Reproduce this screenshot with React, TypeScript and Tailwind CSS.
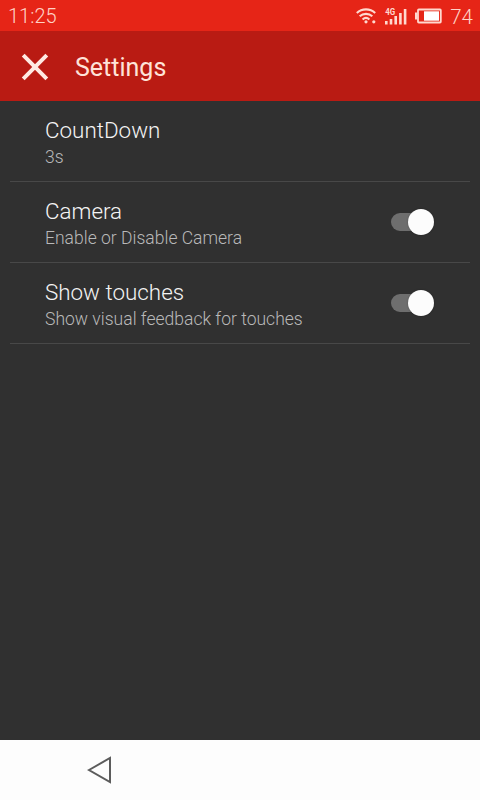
type SettingItem = {
  title: string
  summary: string
  hasSwitch: boolean
}

const settings: SettingItem[] = [
  { title: 'CountDown', summary: '3s', hasSwitch: false },
  { title: 'Camera', summary: 'Enable or Disable Camera', hasSwitch: true },
  { title: 'Show touches', summary: 'Show visual feedback for touches', hasSwitch: true },
]

function WifiIcon() {
  return (
    <svg width="20" height="16" viewBox="0 0 20 16" fill="none" stroke="#ffd9cf" strokeWidth="2.1">
      <path d="M.8 5C6 .2 14 .2 19.2 5" />
      <path d="M3.7 8.3C7.2 5 12.8 5 16.3 8.3" />
      <path d="M6.6 11.4C8.6 9.5 11.4 9.5 13.4 11.4" />
      <circle cx="10" cy="13.8" r="1.6" fill="#ffd9cf" stroke="none" />
      <circle cx="17.8" cy="13.8" r="1.6" fill="#ffd9cf" stroke="none" />
    </svg>
  )
}

function SignalIcon() {
  return (
    <svg width="22" height="17" viewBox="0 0 22 17" fill="#ffd9cf" overflow="visible">
      <text x="0.3" y="6.5" fontSize="9.5" fontWeight="700" textLength="10" lengthAdjust="spacingAndGlyphs">
        4G
      </text>
      <rect x="0" y="13" width="2.6" height="3.5" />
      <rect x="4.7" y="11" width="2.6" height="5.5" />
      <rect x="9.4" y="8" width="2.6" height="8.5" />
      <rect x="14.1" y="5" width="2.6" height="11.5" />
      <rect x="18.8" y="1" width="2.6" height="15.5" />
    </svg>
  )
}

function BatteryIcon() {
  return (
    <svg width="27" height="16" viewBox="0 0 27 16" fill="none">
      <rect x="3" y="1.5" width="22.8" height="13" rx="0.8" stroke="#ffd9cf" strokeWidth="1.8" />
      <rect x="0" y="4.5" width="2.4" height="7" fill="#ffd9cf" />
      <rect x="9" y="3.3" width="15" height="9.4" fill="#fff" />
    </svg>
  )
}

function Switch() {
  return (
    <div className="relative h-[26px] w-[43px]">
      <div className="absolute top-1 left-0 h-[18px] w-9 rounded-full bg-[#6e6e6e]" />
      <div className="absolute top-0 right-0 size-[26px] rounded-full bg-[#fcfcfc] shadow-[0_0_2px_rgba(0,0,0,0.3)]" />
    </div>
  )
}

export default function App() {
  return (
    <div className="flex h-screen w-full flex-col bg-[#303030] font-['Roboto',sans-serif]">
      {/* Status bar */}
      <div className="flex h-[31px] shrink-0 items-center justify-between bg-[#e62517] pt-px pr-[7px] pl-2 text-[#ffd2c6]">
        <span className="text-[20px] leading-none font-light">11:25</span>
        <div className="flex items-center">
          <WifiIcon />
          <div className="ml-[9px]">
            <SignalIcon />
          </div>
          <div className="ml-2">
            <BatteryIcon />
          </div>
          <span className="ml-2 pt-0.5 text-[20.5px] leading-none font-light">74</span>
        </div>
      </div>

      {/* Title bar */}
      <header className="flex h-[70px] shrink-0 items-center bg-[#b91b13] pt-px pl-[21px]">
        <svg width="28" height="28" viewBox="0 0 28 28" fill="none" stroke="#ffeae2" strokeWidth="4">
          <path d="M2.2 2.2 25.8 25.8M25.8 2.2 2.2 25.8" />
        </svg>
        <h1 className="ml-[26px] pt-0.5 text-[25px] leading-8 text-[#ffe3d9]">Settings</h1>
      </header>

      {/* Preferences */}
      <main className="flex-1 px-2.5">
        {settings.map((item) => (
          <div
            key={item.title}
            className="flex h-[81px] items-center justify-between border-b border-[#484848] pr-9 pl-[35px]"
          >
            <div className="pt-1">
              <div className="text-[22.4px] leading-7 font-light text-[#f4f4f4]">{item.title}</div>
              <div className="text-[17.55px] leading-[26px] font-light text-[#b9b9b9]">{item.summary}</div>
            </div>
            {item.hasSwitch && <Switch />}
          </div>
        ))}
      </main>

      {/* Navigation bar */}
      <nav className="flex h-[60px] shrink-0 items-center bg-[#fdfdfd] pl-[87px]">
        <svg width="25" height="28" viewBox="0 0 25 28" fill="none" stroke="#5c5c5c" strokeWidth="2">
          <path d="M2 14 23 2v24z" />
        </svg>
      </nav>
    </div>
  )
}
